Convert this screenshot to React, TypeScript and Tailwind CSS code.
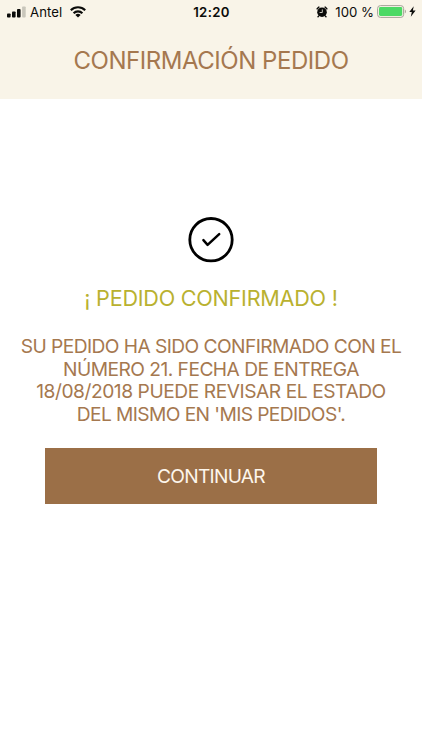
const MESSAGE_LINES = [
  { text: "SU PEDIDO HA SIDO CONFIRMADO CON EL", className: "tracking-[-0.57px]" },
  { text: "NÚMERO 21. FECHA DE ENTREGA", className: "tracking-[-0.54px]" },
  { text: "18/08/2018 PUEDE REVISAR EL ESTADO", className: "tracking-[-0.45px]" },
  { text: "DEL MISMO EN 'MIS PEDIDOS'.", className: "tracking-[-0.6px]" },
];

function SignalIcon() {
  return (
    <svg width="19" height="12" viewBox="0 0 19 12" fill="#0b0b09">
      <rect x="0" y="7.4" width="3.6" height="4" rx="0.9" />
      <rect x="5" y="5.4" width="3.6" height="6" rx="0.9" />
      <rect x="10" y="3" width="3.6" height="8.4" rx="0.9" />
      <rect x="15.1" y="0.4" width="3.6" height="11" rx="0.9" fill="#c9c6bb" />
    </svg>
  );
}

function WifiIcon() {
  return (
    <svg width="16" height="12" viewBox="0 0 16 12" fill="none" stroke="#0b0b09" strokeWidth="2.1">
      <path d="M.8 4.3a10.2 10.2 0 0 1 14.4 0" />
      <path d="M3.6 7.2a6.2 6.2 0 0 1 8.8 0" />
      <path d="M8 11.6 5.4 9.1a3.7 3.7 0 0 1 5.2 0z" fill="#0b0b09" stroke="none" />
    </svg>
  );
}

function AlarmIcon() {
  return (
    <svg width="12" height="12" viewBox="0 0 12 12" fill="none" stroke="#0b0b09" strokeLinecap="round">
      <circle cx="6" cy="6.2" r="4.8" fill="#0b0b09" stroke="none" />
      <path d="M1.1 2.9a5 5 0 0 1 1.8-1.8M10.9 2.9a5 5 0 0 0-1.8-1.8M2.6 10.1l-.6.7M9.4 10.1l.6.7" strokeWidth="1.4" />
      <path d="M6.3 3.8v2.7H4" stroke="#f9f4e8" strokeWidth=".8" />
    </svg>
  );
}

function BatteryIcon() {
  return (
    <svg width="30" height="13" viewBox="0 0 30 13" fill="none">
      <rect x=".6" y=".6" width="26" height="11.8" rx="2.8" stroke="#a5a398" />
      <rect x="2" y="2" width="23.2" height="9" rx="1.4" fill="#4cd964" />
      <path d="M27.8 4.5c1.5.6 1.5 3.4 0 4z" fill="#a5a398" />
    </svg>
  );
}

function BoltIcon() {
  return (
    <svg width="7" height="11" viewBox="0 0 7 11" fill="#0b0b09">
      <path d="M4.7.2.3 6.1h2.5L1.8 10.8 6.6 4.6H3.9z" />
    </svg>
  );
}

function StatusBar() {
  return (
    <div className="grid h-6 grid-cols-3 items-center text-[13.2px] text-[#0b0b09]">
      <div className="flex items-center pl-[7px]">
        <SignalIcon />
        <span className="ml-1 pt-px tracking-[0.05px]">Antel</span>
        <span className="ml-[7.5px]">
          <WifiIcon />
        </span>
      </div>
      <span className="pt-px pl-px text-center font-semibold tracking-[0.35px]">12:20</span>
      <div className="flex items-center justify-end pr-[6px] whitespace-nowrap">
        <AlarmIcon />
        <span className="mr-[3px] ml-[7px] pt-px">100 %</span>
        <BatteryIcon />
        <span className="ml-[2px]">
          <BoltIcon />
        </span>
      </div>
    </div>
  );
}

export default function App() {
  return (
    <main className="flex h-[750px] w-[422px] flex-col overflow-hidden bg-white font-['Inter',sans-serif]">
      {/* Header */}
      <header className="h-[99px] bg-[#f9f4e8]">
        <StatusBar />
        <h1 className="pt-[21px] text-center text-[24px] leading-8 font-normal tracking-[-0.46px] text-[#a5784f]">
          CONFIRMACIÓN PEDIDO
        </h1>
      </header>

      {/* Confirmation */}
      <section className="flex flex-col items-center pt-[117px] text-center">
        <svg
          width="48"
          height="48"
          viewBox="0 0 48 48"
          fill="none"
          stroke="#000"
          strokeLinecap="round"
          strokeLinejoin="round"
        >
          <circle cx="24" cy="23.7" r="21.2" strokeWidth="2.8" />
          <path d="M16.4 24.2l4.2 4.6L32.2 18.2" strokeWidth="2.5" />
        </svg>
        <h2 className="mt-5 text-[21.6px] leading-7 font-normal tracking-[-0.24px] text-[#b9b12f]">
          ¡ PEDIDO CONFIRMADO !
        </h2>
        <p className="mt-[23px] text-[19.2px] leading-[22.6px] font-normal whitespace-nowrap text-[#a5784f]">
          {MESSAGE_LINES.map((line) => (
            <span key={line.text} className={`block ${line.className}`}>
              {line.text}
            </span>
          ))}
        </p>
        <button className="mt-[22.6px] h-14 w-[332px] bg-[#9b6f47] pt-px text-[19.2px] font-normal tracking-[-0.75px] text-[#fdf6ec]">
          CONTINUAR
        </button>
      </section>
    </main>
  );
}
